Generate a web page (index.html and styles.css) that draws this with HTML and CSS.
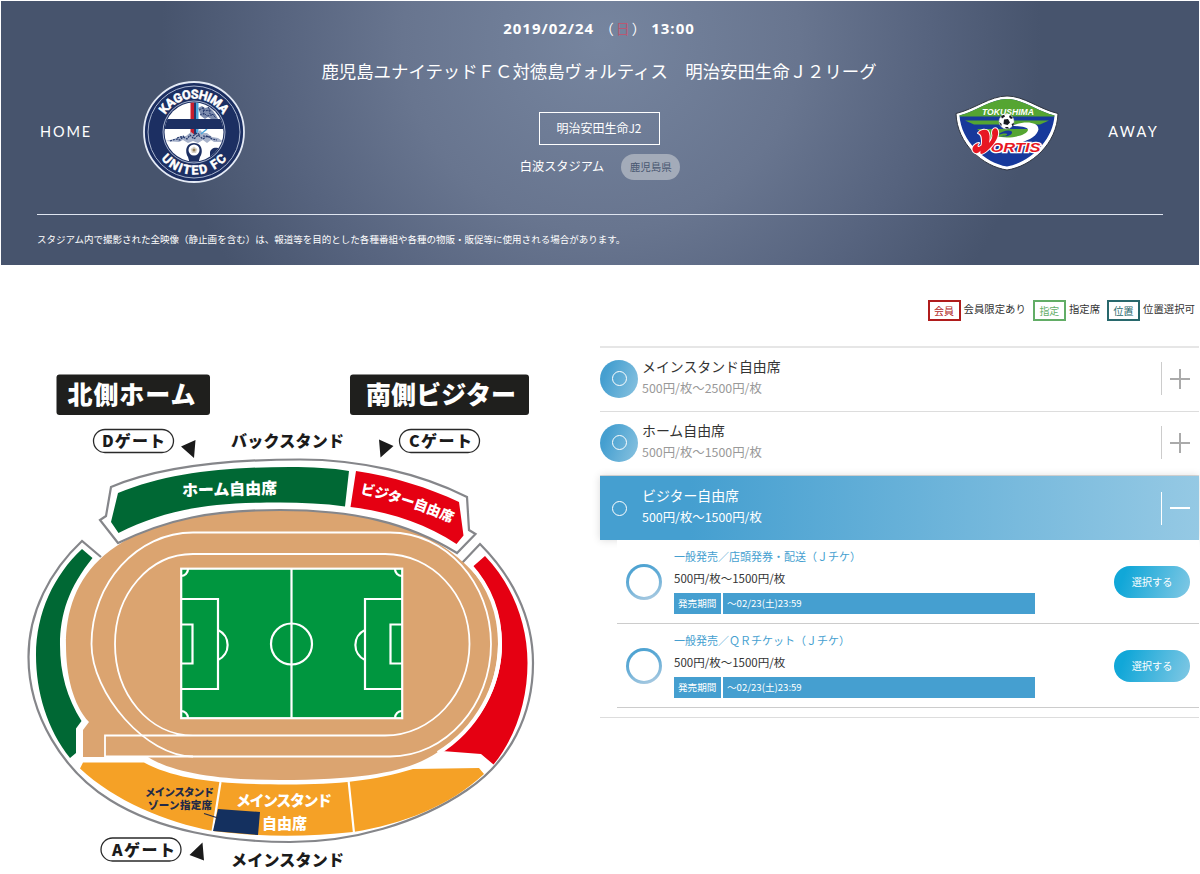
FILE: index.html
```html
<!DOCTYPE html>
<html lang="ja">
<head>
	<meta charset="UTF-8">
	<title>鹿児島ユナイテッドＦＣ対徳島ヴォルティス</title>
	<link rel="stylesheet" href="styles.css">
</head>
<body>
	<div class="game">
		<div class="game-main">
			<span class="side home">HOME</span>
			<svg class="emblem" width="102" height="102" viewBox="0 0 102 102">
				<defs>
					<path id="arc-top" d="M17.500 51a33.500 33.500 0 0 1 67 0"/>
					<path id="arc-bottom" d="M8.500 51a42.500 42.500 0 0 0 85 0"/>
					<clipPath id="inner"><circle cx="51" cy="51" r="29.500"/></clipPath>
				</defs>
				<circle cx="51" cy="51" r="50" fill="#1c2f62" stroke="#e4eaf5" stroke-width="1.800"/>
				<circle cx="51" cy="51" r="46" fill="none" stroke="#a9b5cf" stroke-width="1"/>
				<circle cx="51" cy="51" r="31" fill="none" stroke="#a9b5cf" stroke-width="1"/>
				<g clip-path="url(#inner)">
					<rect x="20" y="20" width="62" height="62" fill="#fff"/>
					<path d="M47.500 20h3.500v34h-3.500z" fill="#c81e2d"/>
					<path d="M51 20h2v34h-2z" fill="#24386c"/>
					<path d="M53 20h2.500v34h-2.500z" fill="#4aa6dc"/>
					<path d="M55 27l4-2 3 2 4-1 4 4 3 4 2 4h-7l-3-2-3 2-4-3z" fill="#7d8cae"/>
					<path d="M56 29l4-2 2 3 4-1 1 4 5 1M57 34l4-2 3 3 5-1M65 26l3 5M60 26l1 9M69 33l4 4" fill="none" stroke="#24386c" stroke-width="1" stroke-dasharray="2 1"/>
					<path d="M22 60l10-2 6-3 5 0 5-4 4 3 5-5 3 3 4 0 5 4 6 1 6 4h-10l-3-2-4 3-4-3-5 3-5-2-5 2-5-3-4 2z" fill="#a7b2ca"/>
					<path d="M27 60l6-2 4 1 3-3 4 2 3-4 4 4 4-4 5 4 4-3 5 3 5 1M34 57l7-2M50 55l4-3 3 2M60 55l8 1" fill="none" stroke="#24386c" stroke-width="1.200" stroke-dasharray="2 1"/>
					<path d="M58 53l6-5" stroke="#4aa6dc" stroke-width="1.500"/>
					<path d="M20 38h62v10H20z" fill="#1c2f62"/>
					<path d="M51 62c-9 0-9 10-6 14l2 7h8l2-7c3-4 3-14-6-14z" fill="#1c2f62"/>
					<path d="M67 76v-4c0-4 4-6 8-5l6-1v16H66z" fill="#1c2f62"/>
				</g>
				<circle cx="51" cy="69" r="5.500" fill="#fff"/>
				<path d="M51 65.500l3.300 2.500-1.200 4h-4.200l-1.200-4z" fill="#d8d3c8"/>
				<circle cx="51" cy="69" r="1.500" fill="#937c58"/>
				<text class="emblem-name" font-size="12.500" textLength="69"><textPath href="#arc-top" startOffset="50%" text-anchor="middle">KAGOSHIMA</textPath></text>
				<text class="emblem-name" font-size="12.500" textLength="75"><textPath href="#arc-bottom" startOffset="50%" text-anchor="middle">UNITED FC</textPath></text>
			</svg>
			<div class="game-info">
				<p class="date">2019/02/24<span class="day">（<em>日</em>）</span>13:00</p>
				<h1>鹿児島ユナイテッドＦＣ対徳島ヴォルティス　明治安田生命Ｊ２リーグ</h1>
				<span class="league">明治安田生命J2</span>
				<p class="stadium">白波スタジアム<span class="pref">鹿児島県</span></p>
			</div>
			<svg class="emblem vortis" width="104" height="76" viewBox="0 0 104 76">
				<defs><clipPath id="shield"><path d="M4.500 20.500C22 16 36 4 52 4s30 12 47.500 16.500C98 46 74 68 52 71.500 30 68 6 46 4.500 20.500z"/></clipPath></defs>
				<path d="M1 18.500C20 14 35 1 52 1s32 13 51 17.500C102 49 76 71.500 52 75 28 71.500 2 49 1 18.500z" fill="#fff" stroke="#303642" stroke-width="1"/>
				<g clip-path="url(#shield)">
					<rect width="104" height="76" fill="#17399b"/>
					<path d="M0 0h104v21.500H0z" fill="#55a532"/>
					<path d="M10 25.500h84l-9 4H19zM22 34h62l-10 9H34z" fill="#55a532"/>
				</g>
				<path d="M56 31c14-6 30-4 27 5-3 8-15 11-28 15H36l4-10c16 4 32-1 33-6 0-3-8-4-17-4z" fill="#fff"/>
				<path d="M43 40c4-5 15-6 14-2-1 3-7 4-12 3 5 0 8-1 7-2-2-1-6 0-9 1z" fill="#17399b"/>
				<circle cx="51.500" cy="26.500" r="7.500" fill="#fff" stroke="#b8bec8" stroke-width=".5"/>
				<path d="M49 24.500l4-.5 2 3.500-2.500 2.500-4-1zM46 21.500l3-2 1 2-3 2zM55 20l3 3-2 1-2-2zM44.200 27l2.500 2-.5 2.500zM50 32l3 0 1 1.500h-3zM56.500 29l2.500-1-1 4z" fill="#171a20"/>
				<text class="shield-name" x="27" y="19.500" font-size="8.500" textLength="52" lengthAdjust="spacingAndGlyphs">TOKUSHIMA</text>
				<text class="shield-title" x="35.500" y="57" font-size="13" textLength="50" lengthAdjust="spacingAndGlyphs">ORTIS</text>
				<path d="M23 38c3-4 8-4 10-2 2 3 2 7 1 12 3-3 4-7 3-10 0-4 3-6 5-4 3 4 0 12-6 18-4 4-7 7-10 7-2-1 1-8 1-13 0-5-1-7-4-8zM24 48c-2 2-2 4 0 4l3-2c0 5-3 9-7 8-5-3-2-9 4-10z" fill="#e71722" stroke="#fff" stroke-width="2" stroke-linejoin="round" paint-order="stroke"/>
			</svg>
			<span class="side away">AWAY</span>
		</div>
		<p class="caution">スタジアム内で撮影された全映像（静止画を含む）は、報道等を目的とした各種番組や各種の物販・販促等に使用される場合があります。</p>
	</div>

	<div class="content">
		<div class="map">
			<svg width="599" height="532" viewBox="1 341 599 532">
				<!-- 外周 -->
				<path class="wall" d="M101 557L82 541C50 571 28.500 612 28.500 657c0 58 34.500 114 81.500 143 48 30 115 42 180 42 62 0 127-18 177-52 43-29 66-75 66-127 0-47-22-88-53-119l-18 19"/>
				<!-- トラック -->
				<path fill="#dba470" d="M66 645C66 575 110 510 280 510c110 0 160 30 183 52 26 23 36 50 35 82-1 46-23 86-60 108-25 17-63 28-158 28-57 0-105-6-132-23H83v-27l6-8C73 705 66 675 66 645z"/>
				<path class="wall" d="M118 543l-18-23 6-4 5-29c43-18 105-27.500 189-27.500 60 0 120 14 167 37.500l2 33 6.500 4-18.500 19c-50-31-105-43-177-43-69 0-112 9-162 33z"/>
				<g class="track">
					<path d="M193 532.500H390C446 532.500 491 583 491 644S446 756.500 390 756.500H105V735.500H385C432 735.500 469.500 694 469.500 644S432 554 385 554H193C149 554 115 594 115 644S149 735.500 193 735.500"/>
					<path d="M193 532.500C137 532.500 91.500 583 91.500 644c0 50 55 112.500 101.500 112.500"/>
				</g>
				<!-- スタンド -->
				<path fill="#006834" d="M118.500 533l-7.500-11 7-29c50-20 105-26 172-26 22 0 42 1 59 4l-4 35.500c-21-3-43-4-65-4-77 0-116 8-161.500 30.500zM82 549l10.500 9C69 587 60 614 60 645c0 28 7 53 21.500 76l-5.500 7.500V753l-6 5C47 729 36 692 36 655c0-42 18-80 46-106z"/>
				<path fill="#e50012" d="M356 471c36 5 73 17 103 31l4.500 33.500-7 8.500c-30-20-66-32-106-37zM485 556l-12 10.500c19 21 29 50 29 78 0 40-21 82-60 106.500l39 3 12.500 10.500C516 737 527.500 700 527.500 663c0-40-15.500-79-42.500-107z"/>
				<path d="M470 565c20 22 30 50 30 79 0 42-23 85-62 109" fill="none" stroke="#fff" stroke-width="4"/>
				<path fill="#f5a126" d="M83 762.500h61c30 16 70 22 143 22 52 0 88-4 126-15.500l66-1 5 6C450 806 403 824 353 832c-45 5-95 5-140-1C165 822 115 801 80 768.500z"/>
				<path class="aisle" d="M220.500 782l-8 50M348.500 780l5.500 53"/>
				<path fill="#14305f" d="M218 809l42 3-2 23-45-4z"/>
				<path d="M204 813.500l14 4.500" stroke="#222a48" stroke-width="1.200"/>
				<!-- ピッチ -->
				<g class="pitch">
					<rect x="181.200" y="568.700" width="221" height="149.500" fill="#00963f"/>
					<path d="M291.500 568.700v149.500M181.200 599H218v90h-36.800M181.200 624.500h11.300v39h-11.300M402 599h-37v90h37M402 624.500h-11.500v39H402M218 630a16.500 16.500 0 0 1 0 30M365 630a16.500 16.500 0 0 0 0 30M188 569a7 7 0 0 1-7 7M395 569a7 7 0 0 0 7 7M188 718a7 7 0 0 0-7-7M395 718a7 7 0 0 1 7-7"/>
					<circle cx="291.500" cy="644" r="20.500"/>
				</g>
				<!-- ラベル -->
				<rect x="56.500" y="374.500" width="153.500" height="40.500" rx="3" fill="#1f1f1d"/>
				<rect x="350" y="374.500" width="179" height="40.500" rx="3" fill="#1f1f1d"/>
				<g class="label white">
					<text x="67.500" y="404" font-size="25" textLength="128">北側ホーム</text>
					<text x="366" y="404" font-size="25" textLength="150">南側ビジター</text>
					<text x="182" y="495" font-size="16" textLength="95" transform="rotate(-1.500 230 489)">ホーム自由席</text>
					<path id="visitor" d="M360 493.500Q410 504 454 524" fill="none" stroke="none"/>
					<text font-size="14"><textPath href="#visitor" textLength="96">ビジター自由席</textPath></text>
					<text x="236" y="806" font-size="15" textLength="96">メインスタンド</text>
					<text x="262" y="828.500" font-size="15" textLength="45">自由席</text>
				</g>
				<g class="label">
					<text x="231" y="447" font-size="16" textLength="113">バックスタンド</text>
					<text x="231" y="866" font-size="16" textLength="113">メインスタンド</text>
					<text x="102" y="447" font-size="16" textLength="63">Dゲート</text>
					<text x="409" y="447" font-size="16" textLength="63">Cゲート</text>
					<text x="112" y="856" font-size="16" textLength="63">Aゲート</text>
				</g>
				<g class="label navy">
					<text x="145" y="796" font-size="10.500" textLength="69">メインスタンド</text>
					<text x="148" y="809" font-size="10.500" textLength="64">ゾーン指定席</text>
				</g>
				<g class="gate">
					<rect x="93.500" y="429.500" width="80" height="23" rx="11.500"/>
					<rect x="399.500" y="429.500" width="80" height="23" rx="11.500"/>
					<rect x="101" y="838" width="80" height="23" rx="11.500"/>
				</g>
				<path d="M181 446.500l14.500-6.500-1.500 18zM379 439.500l14.500 6.500-13 11.500zM189.500 855l13-12.500 1.500 18z" fill="#1b1b1b"/>
			</svg>
		</div>

		<div class="seats">
			<ul class="legend">
				<li class="member"><b>会員</b>会員限定あり</li>
				<li class="reserved"><b>指定</b>指定席</li>
				<li class="position"><b>位置</b>位置選択可</li>
			</ul>
			<div class="seat-list">
				<div class="seat">
					<i class="mark"></i>
					<div class="seat-text">
						<h2>メインスタンド自由席</h2>
						<p>500円/枚〜2500円/枚</p>
					</div>
					<span class="toggle"></span>
				</div>
				<div class="seat">
					<i class="mark"></i>
					<div class="seat-text">
						<h2>ホーム自由席</h2>
						<p>500円/枚〜1500円/枚</p>
					</div>
					<span class="toggle"></span>
				</div>
				<div class="seat open">
					<i class="mark"></i>
					<div class="seat-text">
						<h2>ビジター自由席</h2>
						<p>500円/枚〜1500円/枚</p>
					</div>
					<span class="toggle"></span>
				</div>
				<div class="sales">
					<div class="sale">
						<i class="ring"></i>
						<div class="sale-text">
							<h3>一般発売／店頭発券・配送（Ｊチケ）</h3>
							<p>500円/枚〜1500円/枚</p>
							<div class="period"><span>発売期間</span><span>〜02/23(土)23:59</span></div>
						</div>
						<a class="btn">選択する</a>
					</div>
					<div class="sale">
						<i class="ring"></i>
						<div class="sale-text">
							<h3>一般発売／ＱＲチケット（Ｊチケ）</h3>
							<p>500円/枚〜1500円/枚</p>
							<div class="period"><span>発売期間</span><span>〜02/23(土)23:59</span></div>
						</div>
						<a class="btn">選択する</a>
					</div>
				</div>
			</div>
		</div>
	</div>
</body>
</html>
```
FILE: styles.css
```css
*{
    box-sizing: border-box;
    margin: 0;
    padding: 0;
}
body{
    padding: 1px;
    font-family: "Noto Sans CJK JP", sans-serif;
    color: #333;
    background: #fff;
    overflow: hidden;
}
ul{
    list-style: none;
}
h1, h2, h3{
    font-weight: normal;
}

/* header */
.game{
    height: 264px;
    padding: 0 36px;
    color: #fff;
    background: radial-gradient(ellipse 440px 420px at 600px 40px, #76859f 0, #68758f 45%, #56637e 75%, #47546d 100%);
}
.game-main{
    display: grid;
    grid-template-columns: 105px 102px 1fr 102px 105px;
    height: 214px;
    border-bottom: 1px solid #dfe5f0;
}
.side{
    margin-top: 121px;
    font: 14.5px/20px Lato, sans-serif;
    letter-spacing: 1.9px;
}
.home{
    padding-left: 3px;
}
.away{
    padding-right: 4px;
    text-align: right;
    letter-spacing: 2.3px;
}
.emblem{
    margin: 80px 0 0 1px;
}
.vortis{
    margin: 94px 0 0 -1px;
}
.emblem-name{
    font-family: Roboto, sans-serif;
    font-weight: bold;
    fill: #fff;
    stroke: #fff;
    stroke-width: .5px;
}
.shield-name{
    font-family: "Liberation Sans", sans-serif;
    font-weight: bold;
    font-style: italic;
    fill: #fff;
}
.shield-title{
    font-family: "Liberation Sans", sans-serif;
    font-weight: bold;
    font-style: italic;
    fill: #e71722;
    stroke: #fff;
    stroke-width: 2.5px;
    paint-order: stroke;
}
.game-info{
    display: flex;
    flex-direction: column;
    align-items: center;
    margin-left: -2px;
    padding-top: 17px;
}
.date{
    display: flex;
    font: bold 15px/20px "Open Sans", sans-serif;
    letter-spacing: 1px;
    white-space: nowrap;
}
.day{
    display: flex;
    width: 57px;
    justify-content: center;
    font: 14px/20px "Noto Sans CJK JP", sans-serif;
    letter-spacing: 0;
}
.day em{
    margin: 0 2px;
    font-style: normal;
    color: #b95873;
}
h1{
    margin-top: 18px;
    font-size: 17.4px;
    line-height: 30px;
    white-space: nowrap;
}
.league{
    width: 121px;
    height: 33px;
    margin-top: 26px;
    border: 1px solid #fff;
    font-size: 12px;
    line-height: 30px;
    text-align: center;
}
.stadium{
    display: flex;
    align-items: center;
    margin: 8px 0 0 2px;
    font-size: 12.2px;
    line-height: 23px;
}
.pref{
    width: 59px;
    height: 26px;
    margin: 1px 0 0 17px;
    border-radius: 13px;
    font-size: 10.5px;
    line-height: 26px;
    text-align: center;
    color: #4a5871;
    background: #a3abb9;
}
.caution{
    padding-top: 16px;
    font-size: 9.53px;
    line-height: 16px;
}

/* content */
.content{
    display: flex;
    height: 608px;
}
.map{
    width: 599px;
    padding-top: 76px;
}
.map svg{
    display: block;
}
.wall{
    fill: #fff;
    stroke: #85868a;
    stroke-width: 2.2;
}
.track{
    fill: none;
    stroke: #fff;
    stroke-width: 1.8;
}
.aisle{
    stroke: #fff;
    stroke-width: 2.2;
}
.pitch{
    fill: none;
    stroke: #fff;
    stroke-width: 2.2;
}
.label{
    font-weight: 900;
    fill: #1b1b1b;
}
.white{
    fill: #fff;
}
.navy{
    fill: #222a48;
}
.gate{
    fill: none;
    stroke: #2a2a2a;
    stroke-width: 1.3;
}

/* seat list */
.seats{
    width: 599px;
}
.legend{
    display: flex;
    justify-content: flex-end;
    height: 81px;
    padding: 34px 4px 0 0;
    font-size: 10.4px;
    line-height: 19px;
}
.legend li{
    display: flex;
    margin-left: 7px;
}
.legend b{
    width: 33px;
    height: 21px;
    margin: 1px 3px 0 0;
    border: 2px solid;
    font-weight: normal;
    font-size: 10px;
    line-height: 17px;
    text-align: center;
}
.member b{
    color: #b01c1c;
}
.reserved b{
    color: #62ad66;
}
.position b{
    color: #28686c;
}
.seat-list{
    padding-bottom: 9px;
    border-top: 2px solid #e6e6e6;
    border-bottom: 1px solid #ddd;
}
.seat{
    display: flex;
    align-items: center;
    height: 64px;
    padding-bottom: 2px;
    border-bottom: 1px solid #ddd;
}
.mark{
    display: flex;
    align-items: center;
    justify-content: center;
    width: 38px;
    height: 38px;
    border-radius: 50%;
    background: linear-gradient(110deg, #459fd0 20%, #8ac3e0);
}
.mark::before{
    content: "";
    width: 13px;
    height: 13px;
    border: 1px solid #fff;
    border-radius: 50%;
}
.seat-text{
    flex: 1;
    padding: 0 0 2px 4px;
}
.seat h2{
    font-size: 13.9px;
    line-height: 21px;
}
.seat p{
    font-size: 12.4px;
    line-height: 22px;
    color: #999;
}
.toggle{
    width: 38px;
    height: 33px;
    border-left: 1px solid #ccc;
    background: linear-gradient(#aaa, #aaa) 8px 50%/20px 2px no-repeat, linear-gradient(#aaa, #aaa) 17px 50%/2px 20px no-repeat;
}
.open{
    border: 0;
    padding-bottom: 0;
    color: #fff;
    background: linear-gradient(90deg, #459fd0 15%, #95c9e4);
    box-shadow: 0 0 8px rgba(0, 0, 0, .15);
}
.open .seat-text{
    padding-bottom: 3px;
}
.open .mark{
    background: none;
}
.open p{
    color: #fff;
}
.open .toggle{
    border-color: #fff;
    background: linear-gradient(#fff, #fff) 8px 50%/20px 2px no-repeat;
}
.sales{
    position: relative;
    margin-left: 17px;
    background: #fff;
}
.sale{
    display: flex;
    align-items: center;
    height: 84px;
    padding: 0 9px;
    border-bottom: 1px solid #ccc;
}
.ring{
    width: 36px;
    height: 36px;
    border: 3px solid transparent;
    border-radius: 50%;
    background: linear-gradient(#fff, #fff) padding-box, linear-gradient(160deg, #459fd0, #63acd6 45%, #b5cfe3) border-box;
}
.sale-text{
    width: 361px;
    margin-left: 12px;
    padding-bottom: 4px;
}
.sale h3{
    font-size: 11px;
    line-height: 22px;
    color: #459fd0;
}
.sale p{
    font-size: 11.5px;
    line-height: 23px;
}
.period{
    display: flex;
    margin-top: 3px;
    font-size: 9.6px;
    line-height: 21px;
    color: #fff;
}
.period span{
    padding-left: 4px;
    background: #459fd0;
}
.period span:first-child{
    width: 47px;
    margin-right: 2px;
}
.period span:last-child{
    flex: 1;
}
.btn{
    width: 76px;
    height: 32px;
    margin-left: auto;
    border-radius: 16px;
    font-size: 10.2px;
    line-height: 31px;
    text-align: center;
    color: #fff;
    background: linear-gradient(110deg, #11a7d8 15%, #82c8e4);
}
```
